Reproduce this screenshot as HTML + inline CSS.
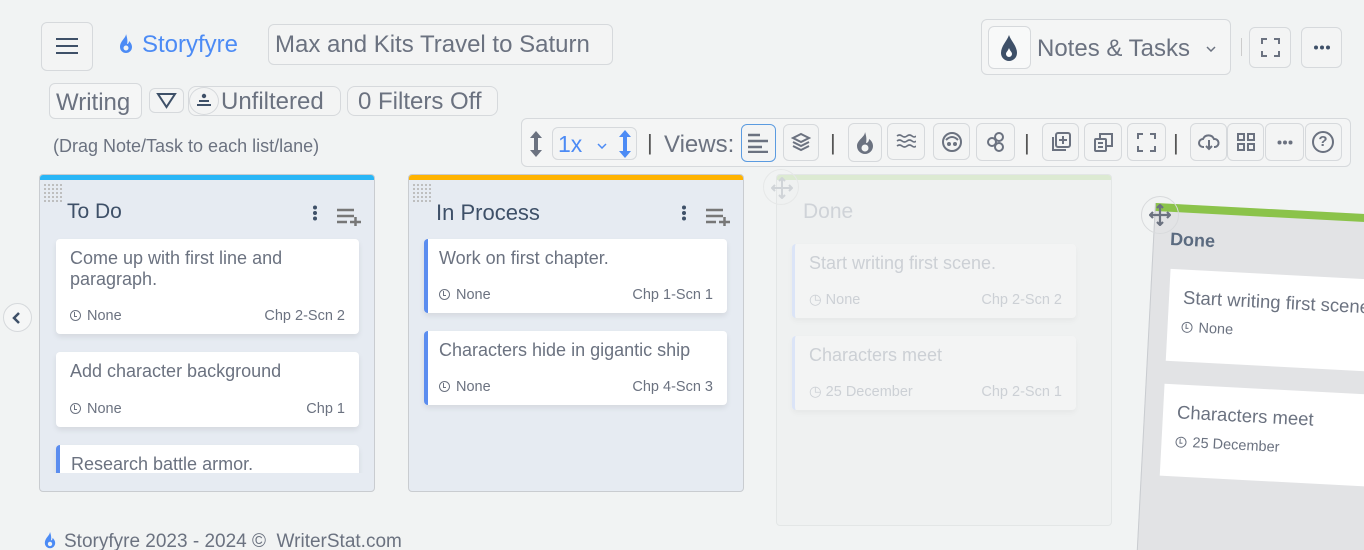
<!DOCTYPE html>
<html><head><meta charset="utf-8"><style>
*{box-sizing:border-box;margin:0;padding:0}
html,body{width:1364px;height:550px;overflow:hidden}
body{background:#f1f3f3;font-family:"Liberation Sans",sans-serif;color:#6b7280;position:relative}
.a{position:absolute}
.btn{position:absolute;border:1px solid #d6d9dc;border-radius:6px;background:#f3f4f4}
.lane{position:absolute;background:#e6ebf2;border:1px solid #c9ccd0;border-radius:4px;overflow:hidden}
.bar{position:absolute;left:0;right:0;top:0;height:5px}
.card{position:absolute;background:#fff;border-radius:4px;box-shadow:0 3px 6px rgba(0,0,0,.08)}
.card.bl{border-left:4px solid #5b8def}
.ct{position:absolute;left:14px;top:9px;right:40px;font-size:18px;color:#6b7280;line-height:21px}
.cm{position:absolute;bottom:10px;left:14px;right:14px;font-size:14.5px;color:#6b7280;display:flex;justify-content:space-between}
.clk{display:inline-block;width:11px;height:11px;border:1.5px solid #6b7280;border-radius:50%;margin-right:6px;vertical-align:-1px;position:relative}
.clk:after{content:"";position:absolute;left:3px;top:1px;width:2px;height:4px;border-left:1.5px solid #6b7280;border-bottom:1.5px solid #6b7280}
.lt{position:absolute;left:27px;top:25px;font-size:21px;color:#3e5068}
.grid{position:absolute;left:3px;top:8px;width:19px;height:19px;background-image:radial-gradient(#bbb 1px,transparent 1.2px);background-size:4px 4px}
.sep{position:absolute;font-size:22px;color:#555;top:130px}
</style></head><body>

<div class="btn" style="left:41px;top:22px;width:52px;height:49px"></div>
<svg class="a" style="left:56px;top:37px" width="22" height="18"><path d="M0 2h22M0 9h22M0 16h22" stroke="#3e5068" stroke-width="2"/></svg>
<svg class="a" style="left:117px;top:33px" width="18" height="22" viewBox="0 0 18 22"><path d="M9 1C9 5 3 8 3 14a6 6 0 0 0 12 0c0-3-2-5-3-6 0 2-1 3-2 3 1-3 0-7-1-10z" fill="#4c8bf5"/><circle cx="9" cy="15" r="2.5" fill="#f1f3f3"/></svg>
<div class="a" style="left:142px;top:31px;font-size:24px;color:#4c8bf5">Storyfyre</div>
<div class="btn" style="left:268px;top:24px;width:345px;height:41px"></div>
<div class="a" style="left:275px;top:31px;font-size:24px;color:#6b7280">Max and Kits Travel to Saturn</div>

<div class="btn" style="left:981px;top:19px;width:250px;height:56px;background:#f4f5f5"></div>
<div class="btn" style="left:988px;top:26px;width:43px;height:43px;background:#f8f9f9"></div>
<svg class="a" style="left:999px;top:34px" width="20" height="28" viewBox="0 0 20 28"><path d="M10 1C8 7 2 12 2 19a8 8 0 0 0 16 0C18 12 12 7 10 1z" fill="#3e5068"/><path d="M10 14c-1 3-3 4-3 6a3 3 0 0 0 6 0c0-2-2-3-3-6z" fill="#fff"/></svg>
<div class="a" style="left:1037px;top:35px;font-size:24px;color:#6b7280">Notes &amp; Tasks</div>
<svg class="a" style="left:1206px;top:46px" width="10" height="6"><path d="M1 1l4 4 4-4" fill="none" stroke="#6b7280" stroke-width="1.5"/></svg>
<div class="a" style="left:1241px;top:38px;width:1px;height:18px;background:#ccc"></div>
<div class="btn" style="left:1249px;top:27px;width:42px;height:41px"></div>
<svg class="a" style="left:1261px;top:38px" width="19" height="19" fill="none" stroke="#6b7280" stroke-width="2"><path d="M1 6V1h5M13 1h5v5M18 13v5h-5M6 18H1v-5"/></svg>
<div class="btn" style="left:1301px;top:27px;width:41px;height:41px"></div>
<svg class="a" style="left:1313px;top:45px" width="18" height="5" fill="#3e5068"><circle cx="3" cy="2.5" r="2"/><circle cx="9" cy="2.5" r="2"/><circle cx="15" cy="2.5" r="2"/></svg>

<div class="btn" style="left:49px;top:83px;width:93px;height:36px;background:#f5f6f6"></div>
<div class="a" style="left:56px;top:89px;font-size:24px">Writing</div>
<div class="btn" style="left:149px;top:88px;width:35px;height:25px"></div>
<svg class="a" style="left:156px;top:92px" width="21" height="17"><path d="M2 2h17L10.5 15z" fill="none" stroke="#3e5068" stroke-width="2"/></svg>
<div class="btn" style="left:188px;top:86px;width:153px;height:30px;border-radius:8px"></div>
<div class="a" style="left:189px;top:87px;width:30px;height:28px;border:1px solid #d6d9dc;border-radius:50%"></div>
<svg class="a" style="left:196px;top:93px" width="16" height="14" fill="#3e5068"><circle cx="8" cy="3" r="2.2"/><rect x="3" y="7" width="10" height="2"/><rect x="1" y="11" width="14" height="2"/></svg>
<div class="a" style="left:221px;top:88px;font-size:24px">Unfiltered</div>
<div class="btn" style="left:347px;top:86px;width:151px;height:30px;border-radius:8px"></div>
<div class="a" style="left:358px;top:88px;font-size:24px">0 Filters Off</div>
<div class="a" style="left:53px;top:136px;font-size:18px">(Drag Note/Task to each list/lane)</div>

<div class="btn" style="left:521px;top:118px;width:830px;height:49px;background:#f4f5f5"></div>
<svg class="a" style="left:529px;top:131px" width="14" height="26" fill="#6b7280"><path d="M7 0l6 7H9v12h4l-6 7-6-7h4V7H1z"/></svg>
<div class="btn" style="left:552px;top:127px;width:85px;height:33px"></div>
<div class="a" style="left:558px;top:131px;font-size:23px;color:#4c8bf5">1x</div>
<svg class="a" style="left:597px;top:143px" width="10" height="6"><path d="M1 1l4 4 4-4" fill="none" stroke="#4c8bf5" stroke-width="1.5"/></svg>
<svg class="a" style="left:618px;top:130px" width="14" height="28" fill="#4c8bf5"><path d="M7 0l6 7H9v14h4l-6 7-6-7h4V7H1z"/></svg>
<div class="sep" style="left:647px">|</div>
<div class="a" style="left:664px;top:131px;font-size:24px">Views:</div>
<div class="btn" style="left:741px;top:124px;width:35px;height:38px;border-color:#5b9be0"></div>
<svg class="a" style="left:748px;top:133px" width="21" height="20" stroke="#6b7280" stroke-width="2.5"><path d="M0 2h12M0 8h20M0 14h14M0 19h20"/></svg>
<div class="btn" style="left:783px;top:124px;width:36px;height:37px"></div>
<svg class="a" style="left:791px;top:132px" width="20" height="20" viewBox="0 0 20 20" fill="none" stroke="#6b7280" stroke-width="2"><path d="M10 2l8 4-8 4-8-4z"/><path d="M2 10l8 4 8-4M2 14l8 4 8-4"/></svg>
<div class="sep" style="left:830px">|</div>
<div class="btn" style="left:848px;top:123px;width:34px;height:39px"></div>
<svg class="a" style="left:855px;top:131px" width="20" height="24" viewBox="0 0 20 24"><path d="M10 1C10 6 2 9 2 15a8 8 0 0 0 16 0c0-3-2-6-4-7 0 2-1 4-3 4 1-4 0-8-1-11z" fill="#6b7280"/><circle cx="10" cy="17" r="3.5" fill="#f3f4f4"/></svg>
<div class="btn" style="left:887px;top:123px;width:38px;height:37px"></div>
<svg class="a" style="left:896px;top:133px" width="20" height="16" fill="none" stroke="#6b7280" stroke-width="1.6"><path d="M1 3q2.5-2 5 0t5 0 5 0 4 0M1 8q2.5-2 5 0t5 0 5 0 4 0M1 13q2.5-2 5 0t5 0 5 0 4 0"/></svg>
<div class="btn" style="left:933px;top:123px;width:37px;height:37px"></div>
<svg class="a" style="left:941px;top:131px" width="22" height="22" fill="none" stroke="#6b7280" stroke-width="2"><circle cx="11" cy="11" r="9"/><path d="M5 9q6-6 12 0"/><circle cx="8" cy="13" r="1" fill="#6b7280"/><circle cx="14" cy="13" r="1" fill="#6b7280"/></svg>
<div class="btn" style="left:976px;top:123px;width:39px;height:38px"></div>
<svg class="a" style="left:985px;top:132px" width="22" height="20" fill="none" stroke="#6b7280" stroke-width="2"><circle cx="7" cy="10" r="4"/><circle cx="14" cy="5" r="4"/><circle cx="14" cy="15" r="4"/></svg>
<div class="sep" style="left:1024px">|</div>
<div class="btn" style="left:1042px;top:123px;width:37px;height:38px"></div>
<svg class="a" style="left:1050px;top:131px" width="22" height="22" fill="none" stroke="#6b7280" stroke-width="2"><path d="M3 6v13h13"/><rect x="6" y="2" width="14" height="14" rx="2"/><path d="M13 5v8M9 9h8"/></svg>
<div class="btn" style="left:1084px;top:123px;width:38px;height:38px"></div>
<svg class="a" style="left:1093px;top:131px" width="22" height="22" fill="none" stroke="#6b7280" stroke-width="2"><rect x="2" y="8" width="11" height="12" rx="1"/><path d="M7 8V3h12v12h-6M5 12h5M5 16h5"/></svg>
<div class="btn" style="left:1127px;top:123px;width:39px;height:38px"></div>
<svg class="a" style="left:1137px;top:133px" width="19" height="19" fill="none" stroke="#6b7280" stroke-width="2"><path d="M1 6V1h5M13 1h5v5M18 13v5h-5M6 18H1v-5"/></svg>
<div class="sep" style="left:1173px">|</div>
<div class="btn" style="left:1190px;top:123px;width:37px;height:38px"></div>
<svg class="a" style="left:1198px;top:133px" width="22" height="18" fill="none" stroke="#6b7280" stroke-width="2"><path d="M6 14H5a4 4 0 0 1 0-8 6 6 0 0 1 11 0 4 4 0 0 1 1 8h-1M11 7v9M8 13l3 3 3-3"/></svg>
<div class="btn" style="left:1227px;top:123px;width:37px;height:38px"></div>
<svg class="a" style="left:1237px;top:133px" width="18" height="18" fill="none" stroke="#6b7280" stroke-width="2"><rect x="1" y="1" width="6" height="6"/><rect x="11" y="1" width="6" height="6"/><rect x="1" y="11" width="6" height="6"/><rect x="11" y="11" width="6" height="6"/></svg>
<div class="btn" style="left:1265px;top:123px;width:39px;height:38px"></div>
<svg class="a" style="left:1277px;top:140px" width="16" height="5" fill="#6b7280"><circle cx="2.5" cy="2.5" r="2"/><circle cx="8" cy="2.5" r="2"/><circle cx="13.5" cy="2.5" r="2"/></svg>
<div class="btn" style="left:1305px;top:123px;width:37px;height:38px"></div>
<div class="a" style="left:1312px;top:131px;width:22px;height:22px;border:2px solid #6b7280;border-radius:50%;text-align:center;font-size:15px;font-weight:bold;line-height:18px;color:#6b7280">?</div>

<!-- To Do lane -->
<div class="lane" style="left:39px;top:174px;width:336px;height:318px">
  <div class="bar" style="background:#29b6f6"></div>
  <div class="grid"></div>
  <div class="lt">To Do</div>
  <svg class="a" style="left:272px;top:30px" width="6" height="16" fill="#3e5068"><circle cx="3" cy="2.5" r="2"/><circle cx="3" cy="8" r="2"/><circle cx="3" cy="13.5" r="2"/></svg>
  <svg class="a" style="left:296px;top:33px" width="26" height="18" stroke="#777" stroke-width="2.5"><path d="M1 2h17M1 8h17M1 14h10M14 14h11M19.5 9v9"/></svg>
  <div style="position:absolute;left:0;top:0;width:100%;height:298px;overflow:hidden">
    <div class="card" style="left:16px;top:64px;width:303px;height:95px"><div class="ct">Come up with first line and paragraph.</div><div class="cm"><span><i class="clk"></i>None</span><span>Chp 2-Scn 2</span></div></div>
    <div class="card" style="left:16px;top:177px;width:303px;height:75px"><div class="ct">Add character background</div><div class="cm"><span><i class="clk"></i>None</span><span>Chp 1</span></div></div>
    <div class="card bl" style="left:16px;top:270px;width:303px;height:75px"><div class="ct" style="left:11px">Research battle armor.</div></div>
  </div>
</div>

<!-- In Process lane -->
<div class="lane" style="left:408px;top:174px;width:336px;height:318px">
  <div class="bar" style="background:#ffb300"></div>
  <div class="grid"></div>
  <div class="lt" style="font-size:22px">In Process</div>
  <svg class="a" style="left:272px;top:30px" width="6" height="16" fill="#3e5068"><circle cx="3" cy="2.5" r="2"/><circle cx="3" cy="8" r="2"/><circle cx="3" cy="13.5" r="2"/></svg>
  <svg class="a" style="left:296px;top:33px" width="26" height="18" stroke="#777" stroke-width="2.5"><path d="M1 2h17M1 8h17M1 14h10M14 14h11M19.5 9v9"/></svg>
  <div class="card bl" style="left:15px;top:64px;width:303px;height:74px"><div class="ct" style="left:11px">Work on first chapter.</div><div class="cm" style="left:11px"><span><i class="clk"></i>None</span><span>Chp 1-Scn 1</span></div></div>
  <div class="card bl" style="left:15px;top:156px;width:303px;height:74px"><div class="ct" style="left:11px;right:10px">Characters hide in gigantic ship</div><div class="cm" style="left:11px"><span><i class="clk"></i>None</span><span>Chp 4-Scn 3</span></div></div>
</div>

<!-- ghost Done -->
<div class="lane" style="left:776px;top:174px;width:336px;height:352px;background:#eff1f1;border-color:#e3e6e6">
  <div class="bar" style="background:#dcead2"></div>
  <div class="a" style="left:26px;top:25px;font-size:21px;color:#cfd3d8">Done</div>
  <div class="card" style="left:15px;top:69px;width:284px;height:74px;border-left:3px solid #dbe4f7;background:#f3f4f4;box-shadow:0 3px 6px rgba(0,0,0,.04)"><div class="ct" style="color:#ccd0d5;right:0">Start writing first scene.</div><div class="cm" style="color:#ccd0d5"><span>◷ None</span><span>Chp 2-Scn 2</span></div></div>
  <div class="card" style="left:15px;top:161px;width:284px;height:74px;border-left:3px solid #dbe4f7;background:#f3f4f4;box-shadow:0 3px 6px rgba(0,0,0,.04)"><div class="ct" style="color:#ccd0d5;right:0">Characters meet</div><div class="cm" style="color:#ccd0d5"><span>◷ 25 December</span><span>Chp 2-Scn 1</span></div></div>
</div>
<div class="a" style="left:763px;top:169px;width:36px;height:36px;border:1px solid #e6e8e8;border-radius:50%"></div>
<svg class="a" style="left:771px;top:177px" width="22" height="22" fill="none" stroke="#d0d4d8" stroke-width="2"><path d="M11 1v20M1 11h20M8 4l3-3 3 3M8 18l3 3 3-3M4 8l-3 3 3 3M18 8l3 3-3 3"/></svg>

<!-- dragged rotated Done -->
<div class="a" style="left:1155px;top:203px;width:336px;height:380px;transform:rotate(3deg);transform-origin:0 0;background:#e2e3e5;border-left:1px solid #c9ccd0">
  <div class="bar" style="background:#8bc34a;height:8px"></div>
  <div class="a" style="left:16px;top:25px;font-size:18px;font-weight:bold;color:#5b6b80">Done</div>
  <div class="a" style="left:18px;top:65px;width:303px;height:92px;background:#fff"><div class="ct" style="top:17px;font-size:18.5px;right:0">Start writing first scene.</div><div class="cm" style="bottom:26px"><span><i class="clk"></i>None</span><span>Chp 2-Scn 2</span></div></div>
  <div class="a" style="left:18px;top:180px;width:303px;height:92px;background:#fff"><div class="ct" style="top:17px;font-size:18.5px">Characters meet</div><div class="cm" style="bottom:26px"><span><i class="clk"></i>25 December</span><span>Chp 2-Scn 1</span></div></div>
</div>
<div class="a" style="left:1141px;top:196px;width:38px;height:38px;border:1px solid #d8dadc;border-radius:50%"></div>
<svg class="a" style="left:1149px;top:204px" width="22" height="22" fill="none" stroke="#6b7280" stroke-width="2.2"><path d="M11 1v20M1 11h20M8 4l3-3 3 3M8 18l3 3 3-3M4 8l-3 3 3 3M18 8l3 3-3 3"/></svg>

<div class="a" style="left:3px;top:303px;width:29px;height:29px;border:1px solid #d6d9dc;border-radius:50%;background:#f5f6f6"></div>
<svg class="a" style="left:12px;top:311px" width="10" height="14"><path d="M7 2L2 7l5 5" fill="none" stroke="#3e5068" stroke-width="2.5"/></svg>

<svg class="a" style="left:41px;top:531px" width="18" height="19" viewBox="0 0 18 22"><path d="M9 1C9 5 3 8 3 14a6 6 0 0 0 12 0c0-3-2-5-3-6 0 2-1 3-2 3 1-3 0-7-1-10z" fill="#4c8bf5"/><circle cx="9" cy="15" r="2.5" fill="#f1f3f3"/></svg>
<div class="a" style="left:64px;top:533px;font-size:19px;line-height:17px;color:#6b7280">Storyfyre 2023 - 2024 ©&nbsp; WriterStat.com</div>
</body></html>
